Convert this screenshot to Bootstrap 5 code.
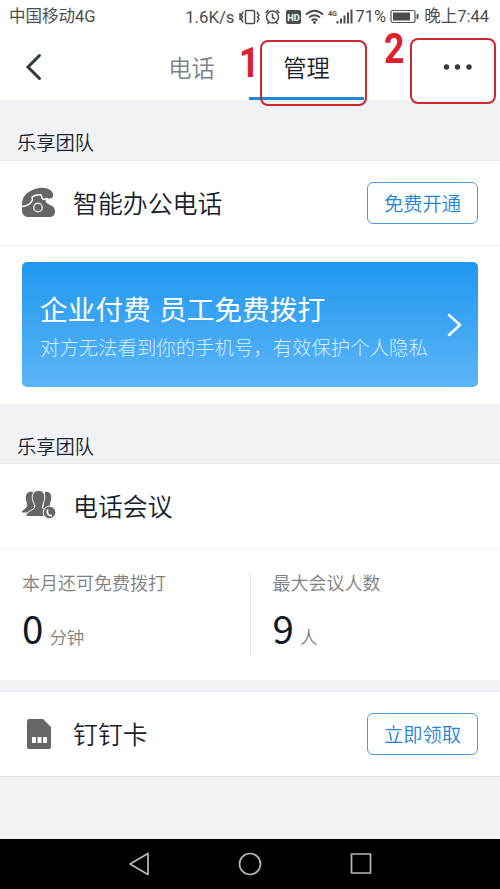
<!DOCTYPE html>
<html lang="zh-CN">
<head>
<meta charset="utf-8">
<meta name="viewport" content="width=device-width, initial-scale=1">
<title>管理</title>
<link href="https://cdn.jsdelivr.net/npm/bootstrap@5.3.0/dist/css/bootstrap.min.css" rel="stylesheet">
<style>
body{font-family:"Noto Sans CJK SC",sans-serif;background:#f1f2f5;color:#17212b;font-weight:350;width:500px;height:889px;overflow:hidden;line-height:1}
svg{display:block;flex:none}
.lh{line-height:1;white-space:nowrap}
.status{height:34px;padding-left:9px;font-family:Roboto,"Noto Sans CJK SC",sans-serif;font-size:16.5px;color:#4c4c4c;font-weight:400}
.carrier{font-size:16.5px;padding-top:1px}
.speed{font-size:16.8px}
.percent{margin-left:-1px}
.clock{margin-right:11px;padding-top:1px}
.topbar{height:66px}
.back{margin-left:25px}
.tab{height:66px;font-size:23.3px;padding-top:22px;border-bottom:3px solid transparent}
.tab-phone{width:115px;margin-left:92px;color:#7d8288;text-align:center}
.tab-manage{width:115px;border-color:#2385d6}
.team{height:60px;padding:33px 0 0 17px;font-size:19.3px}
.team-second{height:59px}
.entry{height:85px;padding:0 22px;border-top:1px solid #e8e9eb}
.entry-name{font-size:24.9px;margin-left:17px;padding-bottom:2px}
.entry-last{height:86px;margin-top:11px;border-bottom:1px solid #e0e2e5}
.action{width:111px;height:42px;font-size:19.3px;font-weight:350;color:#2385d6;border:1.5px solid #4b9ae0;border-radius:6px;padding:1px 0 0}
.promo-wrap{height:159px;padding:16px 22px 0;border-top:1px solid #eeeff0}
.promo{height:125px;border-radius:5px;background:linear-gradient(#2097f0,#5cb5f8);color:#fff;padding:2px 16px 0 18px}
.promo-title{font-size:27.7px;font-weight:400;word-spacing:2px}
.promo-note{font-size:19.4px;margin-top:14px;color:#d5edff;font-weight:300}
.stats{height:132px;padding-top:24px;border-top:1px solid #eeeff0}
.stat{width:251px;height:83px;padding-left:22px;color:#808080;font-size:18px}
.stat+.stat{border-left:1px solid #e2e3e5;margin-left:-1px}
.amount{margin-top:17px}
.num{font-weight:400;font-size:38.5px;color:#101a24;line-height:1}
.unit{margin-left:6px;font-size:17.5px}
.softkeys{height:50px;background:#000}
.callout-box{position:absolute;border:2px solid #cb2832;border-radius:8px}
.callout-num{position:absolute;color:#df202b;font:700 42px/1 Roboto,sans-serif;transform:scaleX(.85);transform-origin:left}
</style>
<script src="https://cdn.jsdelivr.net/npm/bootstrap@5.3.0/dist/js/bootstrap.bundle.min.js"></script>
</head>
<body class="position-relative">
<header class="bg-white">
  <div class="status d-flex align-items-center">
    <span class="carrier lh">中国移动4G</span>
    <span class="speed lh ms-auto">1.6K/s</span>
    <svg width="122" height="34" viewBox="1 0 122 34" fill="none" stroke="#4c4c4c" stroke-width="1.5">
      <rect x="11.5" y="10.500" width="9" height="13" rx="1"/><path d="M8.500 11.500v2l-1.500 1.500 1.500 2-1.500 2 1.500 2v1.500M23.500 11.500v2l1.500 1.500-1.500 2 1.500 2-1.500 2v1.500M6 13v7"/>
      <circle cx="38.500" cy="17" r="6"/><path d="M38.500 13.500v4l2.500 1.500M31.500 13l3-3M45.500 13l-3-3M35 22l-1.500 2M42 22l1.500 2"/>
      <rect x="52" y="10" width="15" height="14" rx="2" fill="#4c4c4c" stroke="none"/>
      <text x="53.300" y="20.500" font-size="9.500" font-weight="700" fill="#fff" stroke="none" textLength="12.500" lengthAdjust="spacingAndGlyphs">HD</text>
      <path d="M72 14.500q8.500-7.500 17 0M75 17.500q5.500-4.500 11 0M77.500 20.500q3-2.500 6 0" stroke-width="1.700"/><circle cx="80.500" cy="22.500" r="1.400" fill="#4c4c4c" stroke="none"/>
      <text x="94" y="16" font-size="8" font-weight="700" fill="#4c4c4c" stroke="none" textLength="9" lengthAdjust="spacingAndGlyphs">4G</text>
      <path d="M103.500 23.500v-2.500M107 23.500v-5M110.500 23.500v-8M114 23.500v-11M117.500 23.500v-14" stroke-width="2"/>
    </svg>
    <span class="percent lh">71%</span>
    <svg class="mx-1" width="30" height="34" viewBox="0 0 30 34"><rect x="1" y="10.500" width="24" height="12" rx="2" fill="none" stroke="#555" stroke-width="1.200"/><rect x="3" y="12.500" width="17" height="8" fill="#4c4c4c"/><path d="M27.500 14v5" stroke="#4c4c4c" stroke-width="1.800"/></svg>
    <span class="clock lh">晚上7:44</span>
  </div>
  <nav class="topbar d-flex">
    <svg class="back" width="17" height="66" viewBox="0 0 17 66" fill="none" stroke="#30383f" stroke-width="3" stroke-linecap="round"><path d="M14.500 21.500 3 33l11.500 11.500"/></svg>
    <div class="tab tab-phone lh">电话</div>
    <div class="tab tab-manage text-center lh">管理</div>
    <svg class="ms-auto me-4" width="34" height="66" viewBox="0 0 34 66" fill="#343b43"><circle cx="4.500" cy="33" r="2.700"/><circle cx="15.500" cy="33" r="2.700"/><circle cx="27" cy="33" r="2.700"/></svg>
  </nav>
</header>
<main>
  <div class="team lh">乐享团队</div>
  <section class="bg-white">
    <div class="entry d-flex align-items-center">
      <svg width="34" height="34" viewBox="0 0 34 34"><path fill="#666" d="M0 18C0 9 8 3 18 2c8-1 14 3 13 8-.5 3-4 3-7 2-3 8 9 5 9 13 0 4-2 6-6 6H6c-4 0-6-3-6-7Z"/><path d="M0 20.500c5-.5 9-3 10.500-6.500l-.5-3c2-1.500 6-2.500 9-2.200l1.500 4c2 1 4 0 5-.8" fill="none" stroke="#fff" stroke-width="1.500" stroke-linejoin="round"/><circle cx="16" cy="21.500" r="4.300" fill="none" stroke="#ddd" stroke-width="1.500"/></svg>
      <span class="entry-name lh">智能办公电话</span>
      <button class="action btn ms-auto lh">免费开通</button>
    </div>
    <div class="promo-wrap">
      <div class="promo d-flex align-items-center justify-content-between">
        <div><div class="promo-title lh">企业付费 员工免费拨打</div><div class="promo-note lh">对方无法看到你的手机号，有效保护个人隐私</div></div>
        <svg width="16" height="26" viewBox="0 0 16 26" fill="none" stroke="#fff" stroke-width="2.500" stroke-linecap="round"><path d="m3 2 11 10L3 22"/></svg>
      </div>
    </div>
  </section>
  <div class="team team-second lh">乐享团队</div>
  <section class="bg-white">
    <div class="entry d-flex align-items-center">
      <svg width="34" height="34" viewBox="0 0 34 34" fill="#666"><path d="M11 3C5 2 3 6 4 11c1 4 2 6 0 8l-4 3v1.500h8l7-7ZM23 3c5-1 7 3 6 8-1 4-2 6 0 8l-8 2Z"/><path stroke="#fff" stroke-width="1" d="M16.500 1.500c-5 0-7 4-6 9 1 4 3 6 2 8-1 3-8 3-9 9H26c0-6-4-6-5.500-9 0-2 1-4 2-8 1-5-1-9-6-9Z"/><circle cx="27.500" cy="23.500" r="6.300" stroke="#fff"/><path d="M25.500 20.500c-1 4 1 6.500 4.500 6" fill="none" stroke="#fff" stroke-width="1.800"/></svg>
      <span class="entry-name lh">电话会议</span>
    </div>
    <div class="stats d-flex">
      <div class="stat"><div class="lh">本月还可免费拨打</div><div class="amount d-flex align-items-baseline lh"><span class="num">0</span><span class="unit">分钟</span></div></div>
      <div class="stat"><div class="lh">最大会议人数</div><div class="amount d-flex align-items-baseline lh"><span class="num">9</span><span class="unit">人</span></div></div>
    </div>
  </section>
  <section class="entry entry-last bg-white d-flex align-items-center">
    <svg width="34" height="34" viewBox="0 0 34 34"><path fill="#666" d="M7 2h14l8 8v20a2 2 0 0 1-2 2H7a2 2 0 0 1-2-2V4a2 2 0 0 1 2-2Z"/><path fill="#fff" d="M10 20h4v6h-4zm5.500 0h4v6h-4zm5.500 0h4v6h-4z"/></svg>
    <span class="entry-name lh">钉钉卡</span>
    <button class="action btn ms-auto lh">立即领取</button>
  </section>
</main>
<footer class="softkeys fixed-bottom">
  <svg width="500" height="50" viewBox="0 0 500 50" fill="none" stroke="#b8b8b8" stroke-width="1.700" stroke-linejoin="round"><path d="M130 25 148 14.500v21Z"/><circle cx="250" cy="25" r="10.500"/><rect x="351.500" y="15" width="19" height="19"/></svg>
</footer>
<div class="callout-box" style="left:260px;top:40px;width:107px;height:66px"></div>
<div class="callout-box" style="left:410px;top:38px;width:86px;height:66px"></div>
<div class="callout-num" style="left:239px;top:42px">1</div>
<div class="callout-num" style="left:384px;top:28px">2</div>
</body>
</html>
